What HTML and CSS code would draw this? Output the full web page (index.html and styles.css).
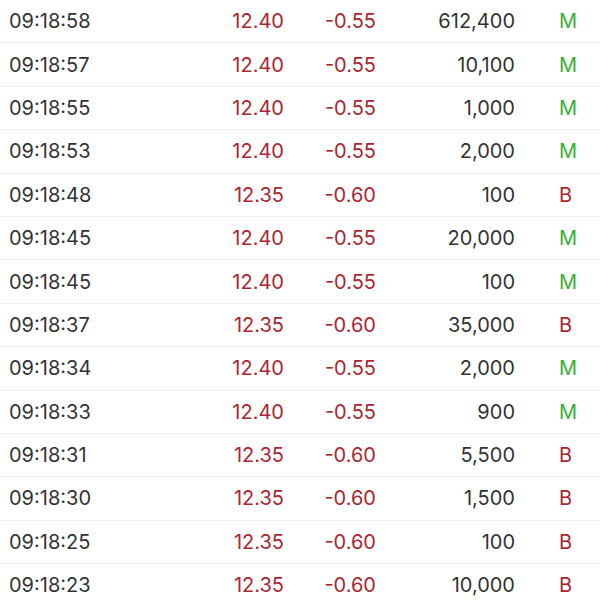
FILE: index.html
```html
<!DOCTYPE html>
<html>
<head>
<meta charset="utf-8">
<link rel="stylesheet" href="styles.css">
</head>
<body>
<div class="list">
  <div class="row"><span class="time">09:18:58</span><span class="price">12.40</span><span class="chg">-0.55</span><span class="vol">612,400</span><span class="flag m">M</span></div>
  <div class="row"><span class="time">09:18:57</span><span class="price">12.40</span><span class="chg">-0.55</span><span class="vol">10,100</span><span class="flag m">M</span></div>
  <div class="row"><span class="time">09:18:55</span><span class="price">12.40</span><span class="chg">-0.55</span><span class="vol">1,000</span><span class="flag m">M</span></div>
  <div class="row"><span class="time">09:18:53</span><span class="price">12.40</span><span class="chg">-0.55</span><span class="vol">2,000</span><span class="flag m">M</span></div>
  <div class="row"><span class="time">09:18:48</span><span class="price">12.35</span><span class="chg">-0.60</span><span class="vol">100</span><span class="flag b">B</span></div>
  <div class="row"><span class="time">09:18:45</span><span class="price">12.40</span><span class="chg">-0.55</span><span class="vol">20,000</span><span class="flag m">M</span></div>
  <div class="row"><span class="time">09:18:45</span><span class="price">12.40</span><span class="chg">-0.55</span><span class="vol">100</span><span class="flag m">M</span></div>
  <div class="row"><span class="time">09:18:37</span><span class="price">12.35</span><span class="chg">-0.60</span><span class="vol">35,000</span><span class="flag b">B</span></div>
  <div class="row"><span class="time">09:18:34</span><span class="price">12.40</span><span class="chg">-0.55</span><span class="vol">2,000</span><span class="flag m">M</span></div>
  <div class="row"><span class="time">09:18:33</span><span class="price">12.40</span><span class="chg">-0.55</span><span class="vol">900</span><span class="flag m">M</span></div>
  <div class="row"><span class="time">09:18:31</span><span class="price">12.35</span><span class="chg">-0.60</span><span class="vol">5,500</span><span class="flag b">B</span></div>
  <div class="row"><span class="time">09:18:30</span><span class="price">12.35</span><span class="chg">-0.60</span><span class="vol">1,500</span><span class="flag b">B</span></div>
  <div class="row"><span class="time">09:18:25</span><span class="price">12.35</span><span class="chg">-0.60</span><span class="vol">100</span><span class="flag b">B</span></div>
  <div class="row"><span class="time">09:18:23</span><span class="price">12.35</span><span class="chg">-0.60</span><span class="vol">10,000</span><span class="flag b">B</span></div>
</div>
</body>
</html>
```
FILE: styles.css
```css
html, body {
  margin: 0;
  padding: 0;
  background: #fff;
  overflow: hidden;
}
body {
  font-family: Inter, "Liberation Sans", sans-serif;
  font-size: 20px;
  color: #333;
}
.list {
  display: flex;
  flex-direction: column;
}
.row {
  display: grid;
  grid-template-columns: 140px 135px 92px 139px 85px;
  align-items: center;
  height: 43.4px;
  box-sizing: border-box;
  padding-left: 9px;
  border-bottom: 1px solid #f1f1f1;
}
.time { text-align: left; }
.price, .chg { text-align: right; color: #ab2630; }
.vol { text-align: right; color: #333; }
.flag { padding-left: 44px; }
.flag.m { color: #35b035; }
.flag.b { color: #ab2630; }
```
